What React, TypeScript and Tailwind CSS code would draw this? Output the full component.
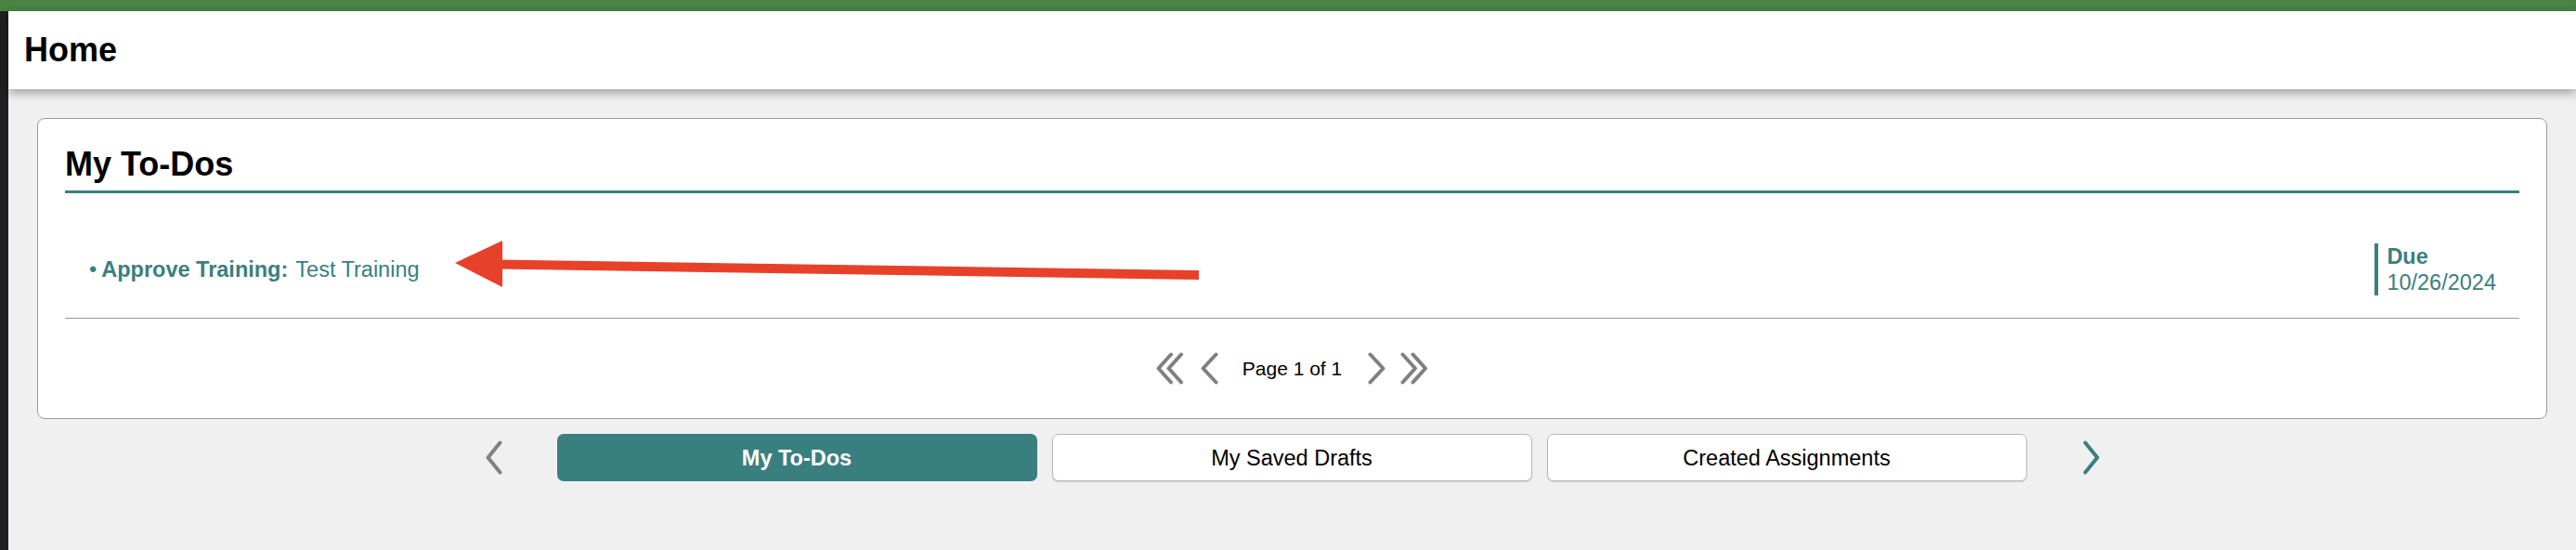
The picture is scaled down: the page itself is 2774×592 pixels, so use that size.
import React from "react";

const TEAL = "#3a7f80";

function Chevron({
  dir,
  color,
  w,
  h,
  sw,
}: {
  dir: "left" | "right";
  color: string;
  w: number;
  h: number;
  sw: number;
}) {
  const pad = sw / 2 + 0.5;
  const pts =
    dir === "left"
      ? `${w - pad},${pad} ${pad},${h / 2} ${w - pad},${h - pad}`
      : `${pad},${pad} ${w - pad},${h / 2} ${pad},${h - pad}`;
  return (
    <svg width={w} height={h} viewBox={`0 0 ${w} ${h}`} className="block shrink-0">
      <polyline
        points={pts}
        fill="none"
        stroke={color}
        strokeWidth={sw}
        strokeLinecap="round"
        strokeLinejoin="round"
      />
    </svg>
  );
}

function DoubleChevron({ dir }: { dir: "left" | "right" }) {
  const w = 30;
  const h = 35;
  const sw = 4;
  const p = 2.5;
  const one = (x: number) =>
    dir === "left"
      ? `${x + 16},${p} ${x + p},${h / 2} ${x + 16},${h - p}`
      : `${x + p},${p} ${x + 16},${h / 2} ${x + p},${h - p}`;
  return (
    <svg width={w} height={h} viewBox={`0 0 ${w} ${h}`} className="block shrink-0">
      <g fill="none" stroke="#808080" strokeWidth={sw} strokeLinecap="round" strokeLinejoin="round">
        <polyline points={one(0)} />
        <polyline points={one(11)} />
      </g>
    </svg>
  );
}

function TabButton({ label, active }: { label: string; active?: boolean }) {
  return active ? (
    <button className="w-[517px] h-[51px] rounded-[7px] bg-[#3a7f80] text-white font-bold text-[23.5px] leading-[28px] flex items-center justify-center">
      {label}
    </button>
  ) : (
    <button className="w-[517px] h-[51px] rounded-[7px] bg-white border border-[#b9b9b9] shadow-[0_1px_1px_rgba(0,0,0,0.15)] text-black text-[23.5px] leading-[28px] flex items-center justify-center">
      {label}
    </button>
  );
}

export default function App() {
  return (
    <div className="relative w-[2774px] h-[592px] overflow-hidden bg-[#f0f0f0] flex flex-col font-['Liberation_Sans',Arial,sans-serif]">
      {/* top brand bar */}
      <div className="h-[12px] shrink-0 bg-[#4a8343]" />

      <div className="flex flex-1 min-h-0">
        {/* side rail */}
        <div className="w-[9px] shrink-0 bg-[#202022]" />

        <div className="flex-1 flex flex-col min-w-0">
          <header className="relative z-10 h-[84px] shrink-0 bg-white flex items-center pl-[17px] shadow-[0_4px_10px_rgba(0,0,0,0.35)]">
            <h1 className="text-[36px] leading-[36px] font-bold text-black">Home</h1>
          </header>

          <main className="px-[31px] pt-[31px] flex flex-col">
            {/* To-Do card */}
            <section className="bg-white border border-[#9a9a9a] rounded-[8px] px-[29px] pt-[31px]">
              <h2 className="text-[36px] leading-[36px] font-bold text-black mb-[10px]">My To-Dos</h2>
              <div className="h-[3px] bg-[#3a7f80]" />

              <div className="flex items-center justify-between pt-[54px] pb-[24px]">
                <div className="pl-[26px] text-[23.5px] leading-[27px] text-[#3a7f80] flex items-center">
                  <span className="mr-[5px]">•</span>
                  <span className="font-bold">Approve Training:</span>
                  <span className="ml-[8px]">Test Training</span>
                </div>
                <div className="mr-[25px] border-l-[4px] border-[#3a7f80] pl-[9px] text-[#3a7f80] text-[23.5px] leading-[28px]">
                  <div className="font-bold">Due</div>
                  <div>10/26/2024</div>
                </div>
              </div>

              <div className="h-px bg-[#9a9a9a]" />

              <div className="h-[107px] flex items-center justify-center">
                <DoubleChevron dir="left" />
                <div className="ml-[18px]">
                  <Chevron dir="left" color="#808080" w={19} h={35} sw={4} />
                </div>
                <span className="ml-[26px] text-[21px] leading-[24px] text-black">Page 1 of 1</span>
                <div className="ml-[28px]">
                  <Chevron dir="right" color="#808080" w={19} h={35} sw={4} />
                </div>
                <div className="ml-[16px]">
                  <DoubleChevron dir="right" />
                </div>
              </div>
            </section>

            {/* tab switcher */}
            <div className="mt-[16px] flex items-center justify-center">
              <Chevron dir="left" color="#808080" w={18} h={37} sw={4} />
              <div className="ml-[59px] flex gap-[16px]">
                <TabButton label="My To-Dos" active />
                <TabButton label="My Saved Drafts" />
                <TabButton label="Created Assignments" />
              </div>
              <div className="ml-[60px]">
                <Chevron dir="right" color={TEAL} w={18} h={37} sw={4} />
              </div>
            </div>
          </main>
        </div>
      </div>

      {/* annotation arrow */}
      <svg
        className="absolute inset-0 pointer-events-none"
        width={2774}
        height={592}
        viewBox="0 0 2774 592"
      >
        <line x1={536} y1={284.5} x2={1291} y2={296} stroke="#e8412a" strokeWidth={10} />
        <polygon points="490,283 541,259 541,309" fill="#e8412a" />
      </svg>
    </div>
  );
}
